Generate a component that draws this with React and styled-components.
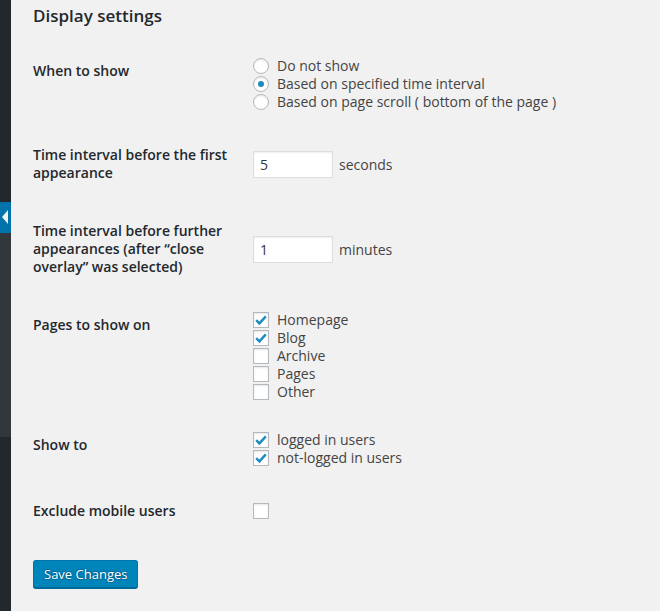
import React from "react";
import styled, { createGlobalStyle } from "styled-components";

const Global = createGlobalStyle`
  html, body { margin: 0; padding: 0; background: #f1f1f1; }
  body { font-family: "Open Sans", "Liberation Sans", sans-serif; font-size: 13px; color: #444; }
  * { box-sizing: border-box; }
`;

const Page = styled.div`
  display: flex;
  min-height: 611px;
  height: 611px;
  overflow: hidden;
`;

const Sidebar = styled.div`
  width: 11px;
  flex: none;
  display: flex;
  flex-direction: column;
  background: #23282d;
`;

const SideTop = styled.div`
  height: 202px;
  background: #23282d;
`;

const SideActive = styled.div`
  position: relative;
  height: 31px;
  background: #0073aa;
`;

const Arrow = styled.span`
  position: absolute;
  right: 3px;
  top: 8px;
  width: 0;
  height: 0;
  border-style: solid;
  border-width: 7px 6px 7px 0;
  border-color: transparent #f1f1f1 transparent transparent;
`;

const SideSub = styled.div`
  height: 204px;
  background: #32373c;
`;

const Content = styled.div`
  flex: 1;
  padding: 0 0 0 22px;
`;

const Title = styled.h2`
  margin: 0;
  padding-top: 4px;
  height: 42px;
  font-size: 17px;
  line-height: 23px;
  font-weight: 600;
  color: #23282d;
`;

const Row = styled.div`
  display: grid;
  grid-template-columns: 220px 1fr;
`;

const Label = styled.div`
  padding: 20px 10px 20px 0;
  font-size: 14px;
  line-height: 18px;
  font-weight: 600;
  color: #23282d;
  max-width: 210px;
`;

const Field = styled.div`
  padding: 15px 10px 15px 0;
  display: flex;
  flex-direction: column;
  justify-content: ${(p) => (p.$middle ? "center" : "flex-start")};
`;

const Option = styled.label`
  display: flex;
  align-items: center;
  height: 18px;
  font-size: 14px;
  line-height: 18px;
  color: #444;
  gap: 8px;
`;

const Radio = styled.span`
  width: 16px;
  height: 16px;
  flex: none;
  border-radius: 50%;
  border: 1px solid #b4b9be;
  background: #fff;
  box-shadow: inset 0 1px 2px rgba(0, 0, 0, 0.1);
  display: flex;
  align-items: center;
  justify-content: center;
  &::after {
    content: "";
    display: ${(p) => (p.$checked ? "block" : "none")};
    width: 6px;
    height: 6px;
    border-radius: 50%;
    background: #1e8cbe;
  }
`;

const Box = styled.span`
  width: 16px;
  height: 16px;
  flex: none;
  border: 1px solid #b4b9be;
  background: #fff;
  box-shadow: inset 0 1px 2px rgba(0, 0, 0, 0.1);
  display: flex;
  align-items: center;
  justify-content: center;
`;

const InlineGroup = styled.div`
  display: flex;
  align-items: center;
  gap: 6px;
  font-size: 14px;
  color: #444;
`;

const TextInput = styled.input`
  width: 80px;
  height: 27px;
  padding: 2px 6px;
  border: 1px solid #ddd;
  box-shadow: inset 0 1px 2px rgba(0, 0, 0, 0.07);
  background: #fff;
  font-family: "Open Sans", "Liberation Sans", sans-serif;
  font-size: 14px;
  color: #32373c;
  outline: none;
  margin: 0;
`;

const Button = styled.button`
  margin-top: 20px;
  height: 28px;
  padding: 0 10px 1px;
  border: 1px solid #0073aa;
  border-bottom-color: #006799;
  border-radius: 3px;
  background: #0085ba;
  box-shadow: 0 1px 0 #006799;
  color: #fff;
  font-family: "Open Sans", "Liberation Sans", sans-serif;
  font-size: 13px;
  line-height: 26px;
  text-shadow: 0 -1px 1px #006799, 1px 0 1px #006799, 0 1px 1px #006799, -1px 0 1px #006799;
  cursor: pointer;
`;

const Check = () => (
  <svg width="14" height="14" viewBox="0 0 14 14">
    <path d="M2.2 7.2 L5.4 10.4 L11.8 3.4" fill="none" stroke="#1e8cbe" strokeWidth="2.4" strokeLinecap="butt" />
  </svg>
);

const RadioOpt = ({ checked, children }) => (
  <Option>
    <Radio $checked={checked} />
    {children}
  </Option>
);

const CheckOpt = ({ checked, children }) => (
  <Option>
    <Box>{checked && <Check />}</Box>
    {children}
  </Option>
);

export default function App() {
  return (
    <>
      <Global />
      <Page>
        <Sidebar>
          <SideTop />
          <SideActive>
            <Arrow />
          </SideActive>
          <SideSub />
        </Sidebar>
        <Content>
          <Title>Display settings</Title>
          <Row>
            <Label>When to show</Label>
            <Field>
              <RadioOpt>Do not show</RadioOpt>
              <RadioOpt checked>Based on specified time interval</RadioOpt>
              <RadioOpt>Based on page scroll ( bottom of the page )</RadioOpt>
            </Field>
          </Row>
          <Row>
            <Label>Time interval before the first appearance</Label>
            <Field $middle>
              <InlineGroup>
                <TextInput defaultValue="5" />
                seconds
              </InlineGroup>
            </Field>
          </Row>
          <Row>
            <Label>Time interval before further appearances (after “close overlay” was selected)</Label>
            <Field $middle>
              <InlineGroup>
                <TextInput defaultValue="1" />
                minutes
              </InlineGroup>
            </Field>
          </Row>
          <Row>
            <Label>Pages to show on</Label>
            <Field>
              <CheckOpt checked>Homepage</CheckOpt>
              <CheckOpt checked>Blog</CheckOpt>
              <CheckOpt>Archive</CheckOpt>
              <CheckOpt>Pages</CheckOpt>
              <CheckOpt>Other</CheckOpt>
            </Field>
          </Row>
          <Row>
            <Label>Show to</Label>
            <Field>
              <CheckOpt checked>logged in users</CheckOpt>
              <CheckOpt checked>not-logged in users</CheckOpt>
            </Field>
          </Row>
          <Row>
            <Label>Exclude mobile users</Label>
            <Field $middle>
              <Box />
            </Field>
          </Row>
          <Button>Save Changes</Button>
        </Content>
      </Page>
    </>
  );
}
